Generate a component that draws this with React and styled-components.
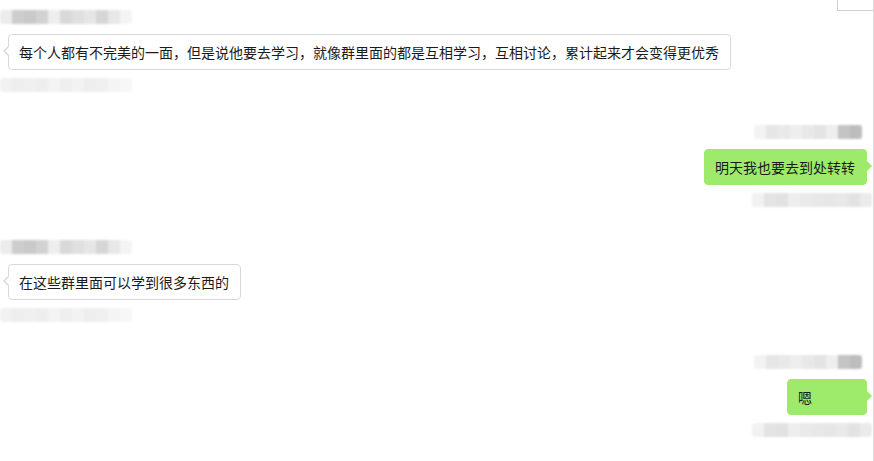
import React from "react";
import styled, { createGlobalStyle, css } from "styled-components";

const GlobalStyle = createGlobalStyle`
  html, body {
    margin: 0;
    padding: 0;
    background: #ffffff;
  }
  body {
    font-family: "Noto Sans CJK SC", "Noto Sans", "Liberation Sans", sans-serif;
    overflow: hidden;
  }
`;

const Page = styled.div`
  position: relative;
  box-sizing: border-box;
  width: 874px;
  height: 461px;
  padding: 10px 7px 0 0;
  border-right: 1px solid #dedede;
  display: flex;
  flex-direction: column;
  gap: 33px;
`;

const Corner = styled.div`
  position: absolute;
  top: 0;
  right: 0;
  width: 35px;
  height: 10px;
  border-left: 1px solid #cfcfcf;
  border-bottom: 1px solid #cfcfcf;
`;

const Group = styled.div`
  display: flex;
  flex-direction: column;
  align-items: ${(p) => (p.mine ? "flex-end" : "flex-start")};
`;

const Mosaic = styled.div`
  display: flex;
  height: ${(p) => p.h}px;
  margin: ${(p) => p.m};
  filter: blur(0.8px);
  border-radius: 3px;
  overflow: hidden;
`;

const Cell = styled.span`
  width: 12px;
  height: 100%;
  flex: none;
`;

const Bubble = styled.div`
  position: relative;
  box-sizing: border-box;
  font-size: 14px;
  line-height: 18px;
  color: #1a1a1a;
  padding: 8px 11px 8px 10px;
  border-radius: 4px;
  white-space: nowrap;

  ${(p) =>
    p.mine
      ? css`
          background: #9eea6a;
          border: 1px solid #9eea6a;
          margin-right: -1px;
          &::after {
            content: "";
            position: absolute;
            top: 11px;
            right: -6px;
            border-top: 5px solid transparent;
            border-bottom: 5px solid transparent;
            border-left: 5px solid #9eea6a;
          }
        `
      : css`
          background: #ffffff;
          border: 1px solid #d9d9d9;
          margin-left: 8px;
          &::before {
            content: "";
            position: absolute;
            top: 10px;
            left: -6px;
            border-top: 6px solid transparent;
            border-bottom: 6px solid transparent;
            border-right: 6px solid #d9d9d9;
          }
          &::after {
            content: "";
            position: absolute;
            top: 11px;
            left: -4px;
            border-top: 5px solid transparent;
            border-bottom: 5px solid transparent;
            border-right: 5px solid #ffffff;
          }
        `}
`;

const leftName = ["#ececec", "#cdcdcd", "#c9c9c9", "#d2d2d2", "#eeeeee", "#d9d9d9", "#e0e0e0", "#e6e6e6", "#d6d6d6", "#e8e8e8", "#f4f4f4"];
const leftBelow = ["#f1f1f1", "#eeeeee", "#f0f0f0", "#eeeeee", "#f3f3f3", "#efefef", "#f2f2f2", "#eeeeee", "#f0f0f0", "#f4f4f4", "#f7f7f7"];
const rightName = ["#f3f3f3", "#e6e6e6", "#e9e9e9", "#eeeeee", "#e8e8e8", "#e4e4e4", "#eeeeee", "#c4c4c4", "#bdbdbd"];
const rightBelow = ["#f2f2f2", "#e4e4e4", "#e2e2e2", "#eeeeee", "#eaeaea", "#e8e8e8", "#e6e6e6", "#e9e9e9", "#e3e3e3", "#ebebeb"];

const Bar = ({ cells, h, m }) => (
  <Mosaic h={h} m={m}>
    {cells.map((c, i) => (
      <Cell key={i} style={{ background: c }} />
    ))}
  </Mosaic>
);

const messages = [
  { mine: false, text: "每个人都有不完美的一面，但是说他要去学习，就像群里面的都是互相学习，互相讨论，累计起来才会变得更优秀" },
  { mine: true, text: "明天我也要去到处转转" },
  { mine: false, text: "在这些群里面可以学到很多东西的" },
  { mine: true, text: "嗯", wide: true },
];

export default function App() {
  return (
    <>
      <GlobalStyle />
      <Page>
        <Corner />
        {messages.map((msg, i) => (
          <Group key={i} mine={msg.mine}>
            <Bar
              cells={msg.mine ? rightName : leftName}
              h={14}
              m={msg.mine ? "0 4px 10px 0" : "0 0 10px 0"}
            />
            <Bubble mine={msg.mine} style={msg.wide ? { width: 80 } : undefined}>
              {msg.text}
            </Bubble>
            <Bar
              cells={msg.mine ? rightBelow : leftBelow}
              h={14}
              m={msg.mine ? "8px -6px 0 0" : "8px 0 0 0"}
            />
          </Group>
        ))}
      </Page>
    </>
  );
}
